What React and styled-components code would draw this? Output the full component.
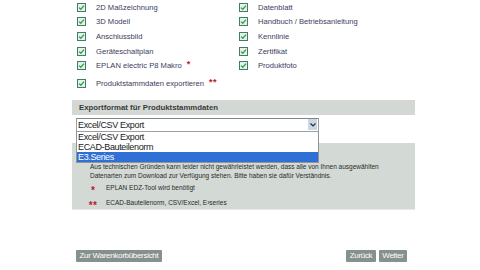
import React from "react";
import styled, { createGlobalStyle } from "styled-components";

const Global = createGlobalStyle`
  html, body { margin: 0; padding: 0; background: #ffffff; }
  body { font-family: "Liberation Sans", Arial, sans-serif; }
`;

const Page = styled.div`
  width: 343px;
  padding-left: 72px;
`;

const CheckGrid = styled.div`
  display: flex;
  padding-left: 5px;
`;

const Column = styled.div`
  display: flex;
  flex-direction: column;
  width: ${(p) => p.$w || "auto"};
`;

const Item = styled.div`
  display: flex;
  align-items: center;
  height: 14.6px;
  margin-top: ${(p) => p.$mt || 0}px;
  font-size: 7.6px;
  color: #3b3b5e;
  white-space: nowrap;
`;

const Label = styled.span`
  margin-left: 10px;
`;

const Star = styled.span`
  color: #b8202f;
  font-weight: bold;
  font-size: 9px;
  position: relative;
  top: -1.5px;
  margin-left: ${(p) => p.$ml || 4}px;
  letter-spacing: 0.5px;
`;

const Check = () => (
  <svg width="9" height="9" viewBox="0 0 9 9" style={{ flex: "none" }}>
    <rect x="0.5" y="0.5" width="8" height="8" fill="#e4f3e8" stroke="#3f7d66" />
    <path d="M2 4.6 L3.8 6.3 L7 2.6" fill="none" stroke="#3d9a4c" strokeWidth="1.3" />
  </svg>
);

const HeaderBar = styled.div`
  margin-top: 9.4px;
  height: 15px;
  background: #d4d8d5;
  display: flex;
  align-items: center;
  padding-left: 7px;
  font-size: 7.8px;
  font-weight: bold;
  color: #3a3a3a;
`;

const SelectWrap = styled.div`
  position: relative;
  margin: 3px 0 0 4px;
  width: 243px;
`;

const SelectBox = styled.div`
  box-sizing: border-box;
  height: 14px;
  border: 1px solid #9aa0a4;
  border-top-color: #7e8488;
  background: #fff;
  display: flex;
  align-items: center;
  justify-content: space-between;
  padding-left: 1px;
  font-size: 9px;
  letter-spacing: -0.35px;
  color: #1a1a1a;
`;

const Arrow = styled.div`
  width: 9px;
  height: 11px;
  margin-right: 1px;
  background: #cdd7e2;
  display: flex;
  align-items: center;
  justify-content: center;
`;

const DropList = styled.div`
  position: absolute;
  top: 14px;
  left: 0;
  width: 243px;
  box-sizing: border-box;
  border: 1px solid #8e9498;
  border-top: none;
  background: #fff;
  z-index: 2;
`;

const Option = styled.div`
  height: 10px;
  line-height: 10px;
  padding-left: 1px;
  font-size: 9px;
  letter-spacing: -0.35px;
  color: ${(p) => (p.$active ? "#ffffff" : "#1a1a1a")};
  background: ${(p) => (p.$active ? "#2f6fd6" : "transparent")};
`;

const InfoPanel = styled.div`
  margin-top: 11px;
  height: 67px;
  box-sizing: border-box;
  background: #d3d9d5;
  border-bottom: 1px solid #e6e8e6;
  padding: 19px 0 0 18px;
  font-size: 6.5px;
  color: #2a2a2a;
`;

const Para = styled.div`
  line-height: 9px;
  white-space: nowrap;
`;

const Bullets = styled.div`
  margin-left: -2px;
  margin-top: 0.5px;
`;

const Bullet = styled.div`
  display: flex;
  align-items: center;
  height: 15px;
  white-space: nowrap;
`;

const Marker = styled.span`
  width: 10px;
  text-align: center;
  color: #b8202f;
  font-weight: bold;
  font-size: 10px;
  letter-spacing: 0.3px;
  position: relative;
  top: 2.5px;
  margin-right: 8px;
`;

const ButtonRow = styled.div`
  margin-top: 40px;
  display: flex;
  justify-content: space-between;
  padding: 0 8px 0 4px;
`;

const Group = styled.div`
  display: flex;
  gap: 3px;
`;

const Button = styled.button`
  height: 12px;
  line-height: 12px;
  padding: 0 3.5px;
  border: none;
  border-radius: 1px;
  background: #86908c;
  color: #ffffff;
  font-family: "Liberation Sans", Arial, sans-serif;
  font-size: 8px;
  letter-spacing: -0.3px;
  cursor: pointer;
`;

const left = [
  "2D Maßzeichnung",
  "3D Modell",
  "Anschlussbild",
  "Geräteschaltplan",
];
const right = [
  "Datenblatt",
  "Handbuch / Betriebsanleitung",
  "Kennlinie",
  "Zertifikat",
  "Produktfoto",
];

export default function App() {
  return (
    <>
      <Global />
      <Page>
        <CheckGrid>
          <Column $w="162px">
            {left.map((t) => (
              <Item key={t}>
                <Check />
                <Label>{t}</Label>
              </Item>
            ))}
            <Item>
              <Check />
              <Label>EPLAN electric P8 Makro</Label>
              <Star $ml={5}>*</Star>
            </Item>
            <Item $mt={3}>
              <Check />
              <Label>Produktstammdaten exportieren</Label>
              <Star $ml={5}>**</Star>
            </Item>
          </Column>
          <Column>
            {right.map((t) => (
              <Item key={t}>
                <Check />
                <Label>{t}</Label>
              </Item>
            ))}
          </Column>
        </CheckGrid>

        <HeaderBar>Exportformat für Produktstammdaten</HeaderBar>

        <SelectWrap>
          <SelectBox>
            <span>Excel/CSV Export</span>
            <Arrow>
              <svg width="6" height="4" viewBox="0 0 6 4">
                <path d="M0.5 0.5 L3 3 L5.5 0.5" fill="none" stroke="#1f2e4a" strokeWidth="1.2" />
              </svg>
            </Arrow>
          </SelectBox>
          <DropList>
            <Option>Excel/CSV Export</Option>
            <Option>ECAD-Bauteilenorm</Option>
            <Option $active>E3.Series</Option>
          </DropList>
        </SelectWrap>

        <InfoPanel>
          <Para>
            Aus technischen Gründen kann leider nicht gewährleistet werden, dass alle von Ihnen ausgewählten
          </Para>
          <Para>Datenarten zum Download zur Verfügung stehen. Bitte haben sie dafür Verständnis.</Para>
          <Bullets>
            <Bullet>
              <Marker>*</Marker>
              <span>EPLAN EDZ-Tool wird benötigt</span>
            </Bullet>
            <Bullet>
              <Marker>**</Marker>
              <span>ECAD-Bauteilenorm, CSV/Excel, E³series</span>
            </Bullet>
          </Bullets>
        </InfoPanel>

        <ButtonRow>
          <Button>Zur Warenkorbübersicht</Button>
          <Group>
            <Button>Zurück</Button>
            <Button>Weiter</Button>
          </Group>
        </ButtonRow>
      </Page>
    </>
  );
}
